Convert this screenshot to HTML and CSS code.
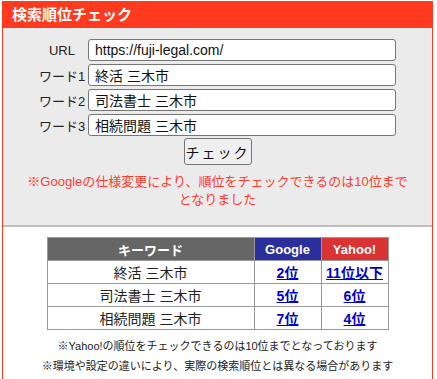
FILE: index.html
```html
<!DOCTYPE html>
<html lang="ja">
<head>
<meta charset="utf-8">
<link rel="stylesheet" href="styles.css">
</head>
<body>
<div class="box">
  <div class="title">検索順位チェック</div>
  <div class="panel">
    <div class="form">
      <label class="lbl">URL</label><input class="inp" type="text" value="https://fuji-legal.com/">
      <label class="lbl">ワード1</label><input class="inp" type="text" value="終活 三木市">
      <label class="lbl">ワード2</label><input class="inp" type="text" value="司法書士 三木市">
      <label class="lbl">ワード3</label><input class="inp" type="text" value="相続問題 三木市">
    </div>
    <div class="btnrow"><button class="btn">チェック</button></div>
    <p class="warn">※Googleの仕様変更により、順位をチェックできるのは10位まで<br>となりました</p>
  </div>
  <div class="result">
    <table class="rank">
      <tr><th class="kw">キーワード</th><th class="gg">Google</th><th class="yh">Yahoo!</th></tr>
      <tr><td>終活 三木市</td><td><a href="#">2位</a></td><td><a href="#">11位以下</a></td></tr>
      <tr><td>司法書士 三木市</td><td><a href="#">5位</a></td><td><a href="#">6位</a></td></tr>
      <tr><td>相続問題 三木市</td><td><a href="#">7位</a></td><td><a href="#">4位</a></td></tr>
    </table>
    <p class="note first">※Yahoo!の順位をチェックできるのは10位までとなっております</p>
    <p class="note">※環境や設定の違いにより、実際の検索順位とは異なる場合があります</p>
  </div>
</div>
</body>
</html>
```
FILE: styles.css
```css
html, body { margin: 0; padding: 0; background: #fff; height: 100%; overflow: hidden; }
body {
  font-family: "Liberation Sans", Arial, "Noto Sans CJK JP", sans-serif;
  color: #222;
  padding: 1px 4px 0 2px;
  box-sizing: border-box;
}
.box {
  border-left: 1px solid #ff3b1f;
  border-right: 1px solid #ff3b1f;
  height: 100%;
}
.title {
  background: #ff3a1f;
  color: #fff;
  font-weight: bold;
  font-size: 15px;
  height: 27px;
  line-height: 27px;
  padding-left: 9px;
}
.panel {
  background: #ebebeb;
  border-bottom: 2px solid #bdbdbd;
  padding: 11px 0 16px;
}
.form {
  display: grid;
  grid-template-columns: 46px 308px;
  column-gap: 3px;
  row-gap: 3px;
  justify-content: center;
  align-items: center;
}
.lbl {
  text-align: center;
  font-size: 13px;
  color: #222;
  white-space: nowrap;
}
.inp {
  box-sizing: border-box;
  width: 308px;
  height: 22px;
  margin: 0;
  border: 1px solid #767676;
  border-radius: 3px;
  padding: 0 6px;
  font-family: "Liberation Sans", Arial, "Noto Sans CJK JP", sans-serif;
  font-size: 14px;
  color: #111;
  background: #fff;
}
.btnrow {
  display: flex;
  justify-content: center;
  margin-top: 2px;
}
.btn {
  width: 68px;
  height: 27px;
  border: 1px solid #767676;
  border-radius: 3px;
  background: #efefef;
  font-family: "Liberation Sans", "Noto Sans CJK JP", sans-serif;
  font-size: 14px;
  letter-spacing: 2px;
  color: #111;
  padding: 0;
}
.warn {
  margin: 8px 0 0;
  text-align: center;
  color: #ff3b30;
  font-size: 13px;
  font-weight: normal;
  line-height: 18px;
}
.result {
  padding-top: 10px;
}
.rank {
  margin: 0 auto;
  border-collapse: collapse;
  width: 342px;
}
.rank th, .rank td {
  border: 1px solid #999;
  height: 22px;
  padding: 0;
  text-align: center;
  font-size: 14px;
}
.rank th {
  color: #fff;
  font-weight: bold;
  font-size: 13px;
}
.kw { background: #666; width: 206px; }
.gg { background: #2b2f9c; width: 66px; }
.yh { background: #d93333; }
.rank a {
  color: #0000cc;
  font-weight: bold;
  text-decoration: underline;
}
.note {
  margin: 4px 0 0;
  text-align: center;
  font-size: 11px;
  line-height: 16px;
  color: #222;
}
.note.first { margin-top: 8px; }
```
